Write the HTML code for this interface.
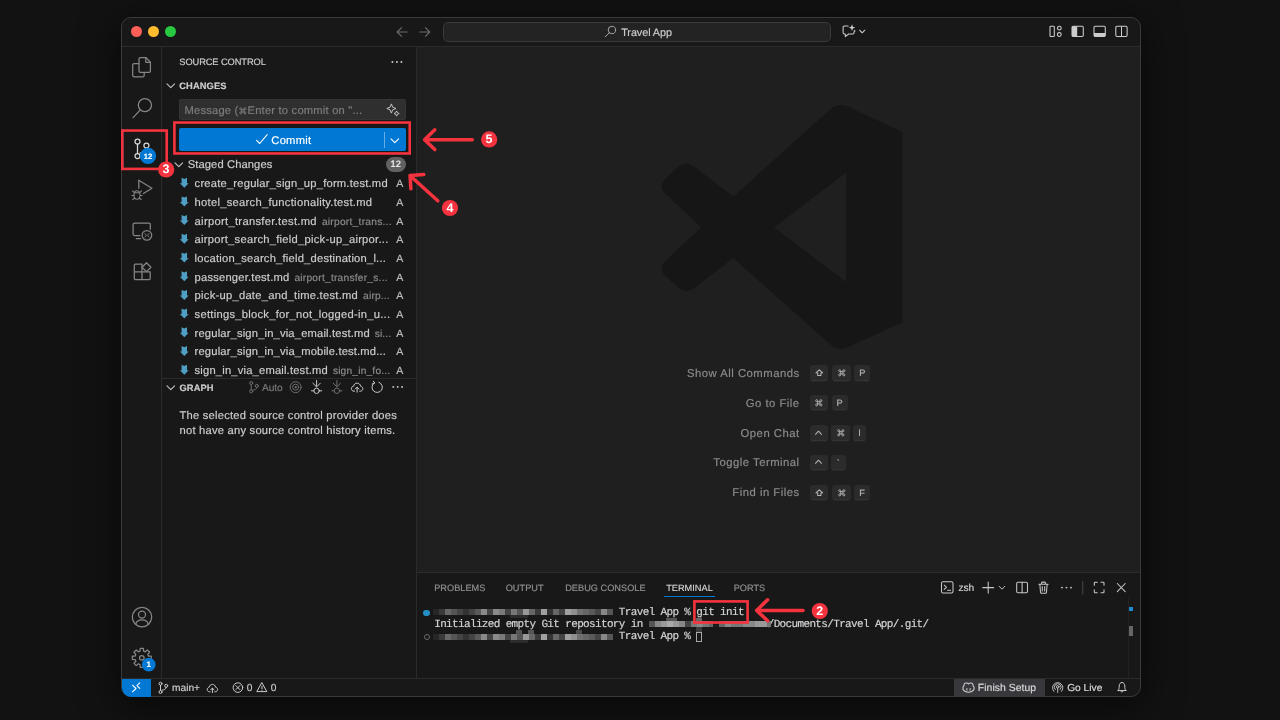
<!DOCTYPE html>
<html>
<head>
<meta charset="utf-8">
<title>Travel App</title>
<style>
*{box-sizing:border-box;margin:0;padding:0}
html,body{width:1280px;height:720px;overflow:hidden;background:#121212}
body{-webkit-text-stroke:.18px;text-rendering:geometricPrecision;font-family:"Liberation Sans",sans-serif;color:#ccc;position:relative;-webkit-font-smoothing:antialiased}
.abs{position:absolute}
#win{position:absolute;left:121px;top:17px;width:1020px;height:680px;border-radius:10px;background:#181818;border:1px solid #3a3a3a;overflow:hidden;box-shadow:0 8px 36px 4px rgba(0,0,0,.5)}
/* everything inside #root is positioned in page coordinates */
#root{position:absolute;left:0;top:0;width:1280px;height:720px;will-change:transform}
.t{position:absolute;white-space:nowrap;line-height:1}
svg{position:absolute;overflow:visible}
.ic{fill:none;stroke:#868686;stroke-width:1.25;stroke-linecap:round;stroke-linejoin:round}
.row{position:absolute;left:162px;width:254px;height:19px}
.fn{position:absolute;left:194.6px;font-size:11.2px;letter-spacing:.22px;color:#ccc;white-space:nowrap;line-height:1}
.fr{position:absolute;left:194.6px;height:18.7px;line-height:18.7px;font-size:11.2px;color:#ccc;white-space:nowrap}.fr span{display:inline-block}.fr .s2{font-size:10.2px;color:#8c8c8c}.fr .sa{font-size:10.6px;color:#bdbdbd}
.st{position:absolute;left:396.4px;font-size:10.2px;color:#bdbdbd;line-height:1}


.key{position:absolute;height:15.5px;border-radius:3px;background:#2b2b2b;box-shadow:0 1px 0 #262626;border-bottom:1px solid #343434}
.lbl{position:absolute;right:480.4px;font-size:11.3px;letter-spacing:.49px;color:#8b8b8b;white-space:nowrap;line-height:1}
.kt{position:absolute;font-size:9.2px;color:#b4b4b4;line-height:1}
.tab{position:absolute;top:584px;font-size:9.2px;color:#8f8f8f;white-space:nowrap;line-height:1;letter-spacing:.02px}
.term{position:absolute;font-family:"Liberation Mono",monospace;font-size:11px;letter-spacing:-.645px;color:#d4d4d4;white-space:pre;line-height:1}
.sb{position:absolute;top:684.1px;font-size:10.2px;color:#ccc;white-space:nowrap;line-height:1}
</style>
</head>
<body>
<div id="win"></div>
<div id="root">

<!-- ===== TITLE BAR ===== -->
<div class="abs" style="left:122px;top:46px;width:1018px;height:1px;background:#2b2b2b"></div>
<div class="abs" style="left:130.5px;top:26.3px;width:11px;height:11px;border-radius:50%;background:#fe5f57"></div>
<div class="abs" style="left:147.5px;top:26.3px;width:11px;height:11px;border-radius:50%;background:#febc2e"></div>
<div class="abs" style="left:164.5px;top:26.3px;width:11px;height:11px;border-radius:50%;background:#28c840"></div>
<!-- nav arrows -->
<svg style="left:396px;top:26px" width="36" height="12" viewBox="0 0 36 12"><g fill="none" stroke="#6a6a6a" stroke-width="1.1" stroke-linecap="round" stroke-linejoin="round"><path d="M11.2 6H1.3M5.6 1.6L1.2 6l4.4 4.4"/><path d="M23.8 6h9.9M29.4 1.6L33.8 6l-4.4 4.4"/></g></svg>
<!-- command center -->
<div class="abs" style="left:442.5px;top:21.5px;width:388.5px;height:20px;border:1px solid #3a3a3a;border-radius:5px;background:#232323"></div>
<svg style="left:604px;top:25px" width="13" height="13" viewBox="0 0 13 13"><g fill="none" stroke="#a8a8a8" stroke-width="1" stroke-linecap="round"><circle cx="7.9" cy="5" r="3.7"/><path d="M5.3 7.7L1.2 11.9"/></g></svg>
<div class="t" style="left:621.2px;top:27.800px;font-size:10.800px;color:#ccc;letter-spacing:-.05px">Travel App</div>
<!-- copilot chat icon -->
<svg style="left:842px;top:24px" width="26" height="14" viewBox="0 0 26 14"><g fill="none" stroke="#ccc" stroke-width="1.05" stroke-linecap="round" stroke-linejoin="round"><path d="M6.2 2H2.3c-.7 0-1.2.5-1.2 1.2v5.6c0 .7.5 1.2 1.2 1.2h1v2.6L6.6 10h4.2c.7 0 1.2-.5 1.2-1.2V8"/><path d="M17.6 6.2l2.6 2.6 2.6-2.6"/></g><path d="M10 0.3l.9 2.4 2.4.9-2.4.9-.9 2.4-.9-2.4-2.4-.9 2.4-.9z" fill="#ccc"/><path d="M12.6 5.6l.4 1 .9.4-.9.4-.4 1-.4-1-.9-.4.9-.4z" fill="#ccc"/></svg>
<!-- layout icons -->
<svg style="left:1049px;top:24.900px" width="80" height="13" viewBox="0 0 80 13"><g fill="none" stroke="#ccc" stroke-width="1.05" stroke-linejoin="round">
<rect x="1" y="1.2" width="4.3" height="10.3" rx=".8"/><circle cx="10.3" cy="3.1" r="1.9"/><circle cx="10.3" cy="9.5" r="1.9"/>
<rect x="23" y="1.2" width="11.3" height="10.3" rx="1.2"/>
<rect x="45" y="1.2" width="11.3" height="10.3" rx="1.2"/>
<rect x="66.8" y="1.2" width="11.3" height="10.3" rx="1.2"/><path d="M72.5 1.2v10.3"/></g>
<path d="M23 2.2c0-.6.4-1 1-1h4.2v10.3H24c-.6 0-1-.4-1-1z" fill="#ccc"/>
<path d="M45 8h11.3v2.500c0 .6-.4 1-1 1H46c-.6 0-1-.4-1-1z" fill="#ccc"/>
</svg>
<!--TITLEBAR-END-->

<!-- ===== ACTIVITY BAR ===== -->
<div class="abs" style="left:161px;top:47px;width:1px;height:632px;background:#2b2b2b"></div>

<!-- files -->
<svg style="left:0;top:0" width="1280" height="720" viewBox="0 0 1280 720"><g class="ic">
<path d="M140.4 57.7h5.6l4.4 4.4v8.9c0 .8-.6 1.4-1.4 1.4h-8.6c-.8 0-1.4-.6-1.4-1.4V59.100c0-.8.600-1.400 1.400-1.400z"/><path d="M145.800 57.800v4.500h4.500"/>
<path d="M138.700 63.600h-4.600c-.8 0-1.400.6-1.400 1.400v10.400c0 .8.600 1.400 1.400 1.400h8.700c.8 0 1.400-.6 1.400-1.400v-2.800"/>
<!-- search -->
<circle cx="144.900" cy="105.100" r="6.600"/><path d="M140.300 109.900l-7.200 7.800"/>
<!-- debug -->
<path d="M138.800 188.300v-8.100l13.100 8.100-8.500 5.200"/>
<path d="M134.100 192.800h5.800M134 195.300c0-3.500 1.200-4.600 3-4.600s3 1.100 3 4.600c0 2.600-1.300 4-3 4s-3-1.400-3-4zM134 195.400h-2.100M140 195.400h2.100M134.300 192.600l-1.800-1.700M139.700 192.600l1.800-1.700M134.600 198l-1.900 1.700M139.400 198l1.900 1.700" stroke-width="1.050"/>
<!-- remote explorer -->
<path d="M139.800 235.500h-5.200c-.8 0-1.500-.7-1.500-1.500v-9.400c0-.8.700-1.500 1.500-1.500h14.200c.8 0 1.500.7 1.500 1.500v4.600M136.300 238.600h4.300"/>
<circle cx="146.900" cy="235.300" r="4.800"/><path d="M144.900 233.600l1.500 1.700-1.500 1.700M149 233.600l-1.500 1.700 1.500 1.700" stroke-width=".9"/>
<!-- extensions -->
<path d="M142 264.200h-6.600c-.6 0-1.100.5-1.100 1.100v13.300c0 .6.500 1.100 1.100 1.100h13.700c.6 0 1.100-.5 1.100-1.100v-6.800h-15.800M142 264.200v15.400"/>
<path d="M146.500 262.700l4.400 4.500-4.400 4.400-4.400-4.400z"/>
<!-- account -->
<circle cx="142" cy="617.100" r="9.700"/><circle cx="142" cy="614.600" r="3.500"/><path d="M135.700 624.300c.6-2.900 3.200-4.400 6.300-4.400s5.700 1.500 6.300 4.400"/>
<!-- gear -->
<path d="M148.47 656.03 L151.26 656.18 L151.26 659.42 L148.47 659.57 L147.77 661.26 L149.64 663.34 L147.34 665.64 L145.26 663.77 L143.57 664.47 L143.42 667.26 L140.18 667.26 L140.03 664.47 L138.34 663.77 L136.26 665.64 L133.96 663.34 L135.83 661.26 L135.13 659.57 L132.34 659.42 L132.34 656.18 L135.13 656.03 L135.83 654.34 L133.96 652.26 L136.26 649.96 L138.34 651.83 L140.03 651.13 L140.18 648.34 L143.42 648.34 L143.57 651.13 L145.26 651.83 L147.34 649.96 L149.64 652.26 L147.77 654.34Z"/><circle cx="141.800" cy="657.800" r="2.300"/>
</g>
<!-- source control (active) -->
<g fill="none" stroke="#d7d7d7" stroke-width="1.250" stroke-linecap="round"><circle cx="137.500" cy="141.500" r="2.500"/><circle cx="146.400" cy="145.600" r="2.500"/><circle cx="137.500" cy="156" r="2.500"/><path d="M137.500 144.100v9.300M146.400 148.200c0 3.200-3 4.300-6.300 4.800"/></g>
<rect x="122" y="129" width="1.300" height="41" fill="#0078d4"/>
<circle cx="148" cy="155.900" r="8.100" fill="#0078d4"/>
<circle cx="148.700" cy="664.700" r="6.900" fill="#0078d4"/>
</svg>
<div class="t" style="left:140px;top:152.900px;width:16px;text-align:center;font-size:7.600px;font-weight:bold;color:#fff">12</div>
<div class="t" style="left:140.700px;top:661.300px;width:16px;text-align:center;font-size:8px;font-weight:bold;color:#fff">1</div>
<!--ACTIVITY-END-->

<!-- ===== SIDEBAR ===== -->
<div class="abs" style="left:416px;top:47px;width:1px;height:632px;background:#2b2b2b"></div>

<div class="t" style="left:179.300px;top:58.200px;font-size:9.300px;color:#ccc;letter-spacing:-.1px">SOURCE CONTROL</div>
<svg style="left:391px;top:60px" width="13" height="4" viewBox="0 0 13 4"><g fill="#ccc"><circle cx="1.400" cy="2" r=".95"/><circle cx="5.900" cy="2" r=".95"/><circle cx="10.400" cy="2" r=".95"/></g></svg>
<!-- CHANGES header -->
<svg style="left:166px;top:82px" width="10" height="8" viewBox="0 0 10 8"><path d="M1 1.800l3.800 3.900 3.800-3.900" fill="none" stroke="#c5c5c5" stroke-width="1.050" stroke-linecap="round" stroke-linejoin="round"/></svg>
<div class="t" style="left:179.300px;top:82.200px;font-size:9.300px;font-weight:bold;color:#ccc;letter-spacing:.1px">CHANGES</div>
<!-- input -->
<div class="abs" style="left:178.500px;top:99px;width:227.500px;height:21.400px;background:#2f2f2f;border:1px solid #353535;border-radius:2px"></div>
<div class="t" style="left:184.500px;top:105.800px;font-size:11.200px;color:#7d7d7d;letter-spacing:.2px">Message (<svg style="position:relative;display:inline-block;vertical-align:-.6px;margin:0 .6px 0 .7px" width="7.700" height="7.700" viewBox="0 0 9 9"><path d="M3.200 3.200V2a1.200 1.200 0 1 0-1.200 1.200H7A1.200 1.200 0 1 0 5.800 2V7A1.200 1.200 0 1 0 7 5.800H2A1.200 1.200 0 1 0 3.200 7z" fill="none" stroke="#7d7d7d" stroke-width="1.050"/></svg>Enter to commit on "...</div>
<svg style="left:386px;top:103px" width="14" height="14" viewBox="0 0 14 14"><g fill="none" stroke="#c8c8c8" stroke-width=".95" stroke-linejoin="round"><path d="M5.400 .9l1.300 3.300 3.300 1.300-3.300 1.300-1.300 3.300-1.300-3.300L.8 5.500l3.300-1.300z"/><path d="M10.600 7.900l.8 1.800 1.800.8-1.800.8-.8 1.800-.8-1.800-1.800-.8 1.800-.8z"/></g></svg>
<!-- commit button -->
<div class="abs" style="left:178.500px;top:128px;width:227.500px;height:23.300px;background:#0078d4;border-radius:2px"></div>
<div class="abs" style="left:384.300px;top:131.500px;width:1px;height:16.500px;background:rgba(255,255,255,.4)"></div>
<svg style="left:255px;top:133px" width="14" height="12" viewBox="0 0 14 12"><path d="M1.600 7.300l3.100 3.200L12.200 1.600" fill="none" stroke="#fff" stroke-width="1.100" stroke-linecap="round" stroke-linejoin="round"/></svg>
<div class="t" style="left:271.300px;top:135.700px;font-size:11.200px;color:#fff;letter-spacing:.25px">Commit</div>
<svg style="left:390px;top:136.500px" width="10" height="8" viewBox="0 0 10 8"><path d="M1 1.800l3.800 3.900 3.800-3.900" fill="none" stroke="#fff" stroke-width="1.050" stroke-linecap="round" stroke-linejoin="round"/></svg>
<!-- staged changes -->
<svg style="left:174px;top:160.500px" width="10" height="8" viewBox="0 0 10 8"><path d="M1 1.800l3.800 3.900 3.800-3.900" fill="none" stroke="#c5c5c5" stroke-width="1.050" stroke-linecap="round" stroke-linejoin="round"/></svg>
<div class="t" style="left:187.700px;top:159.600px;font-size:11.200px;color:#ccc;letter-spacing:.1px">Staged Changes</div>
<div class="abs" style="left:385.600px;top:156.500px;width:20.400px;height:15.400px;border-radius:8px;background:#616161"></div>
<div class="t" style="left:385.600px;top:159.800px;width:20.400px;text-align:center;font-size:9.300px;color:#f8f8f8">12</div>
<svg style="left:0;top:0" width="1280" height="720" viewBox="0 0 1280 720"><g transform="translate(184.300 183.0)"><path d="M-2.700 -5.300l2.700 1.200 2.700-1.200v5.500h1.700l-4.400 4.500-4.400-4.500h1.700z" fill="#4f9fc4"/></g><g transform="translate(184.300 201.7)"><path d="M-2.700 -5.300l2.700 1.200 2.700-1.200v5.500h1.700l-4.400 4.500-4.400-4.500h1.700z" fill="#4f9fc4"/></g><g transform="translate(184.300 220.4)"><path d="M-2.700 -5.300l2.700 1.200 2.700-1.200v5.500h1.700l-4.400 4.500-4.400-4.500h1.700z" fill="#4f9fc4"/></g><g transform="translate(184.300 239.1)"><path d="M-2.700 -5.300l2.700 1.200 2.700-1.200v5.500h1.700l-4.400 4.500-4.400-4.500h1.700z" fill="#4f9fc4"/></g><g transform="translate(184.300 257.8)"><path d="M-2.700 -5.300l2.700 1.200 2.700-1.200v5.500h1.700l-4.400 4.500-4.400-4.500h1.700z" fill="#4f9fc4"/></g><g transform="translate(184.300 276.5)"><path d="M-2.700 -5.300l2.700 1.200 2.700-1.200v5.500h1.700l-4.400 4.500-4.400-4.500h1.700z" fill="#4f9fc4"/></g><g transform="translate(184.300 295.2)"><path d="M-2.700 -5.300l2.700 1.200 2.700-1.200v5.500h1.700l-4.400 4.500-4.400-4.500h1.700z" fill="#4f9fc4"/></g><g transform="translate(184.300 313.9)"><path d="M-2.700 -5.300l2.700 1.200 2.700-1.200v5.500h1.700l-4.400 4.500-4.400-4.500h1.700z" fill="#4f9fc4"/></g><g transform="translate(184.300 332.6)"><path d="M-2.700 -5.300l2.700 1.200 2.700-1.200v5.500h1.700l-4.400 4.500-4.400-4.500h1.700z" fill="#4f9fc4"/></g><g transform="translate(184.300 351.3)"><path d="M-2.700 -5.300l2.700 1.200 2.700-1.200v5.500h1.700l-4.400 4.500-4.400-4.500h1.700z" fill="#4f9fc4"/></g><g transform="translate(184.300 370.0)"><path d="M-2.700 -5.300l2.700 1.200 2.700-1.200v5.500h1.700l-4.400 4.500-4.400-4.500h1.700z" fill="#4f9fc4"/></g></svg>
<div class="fr" style="top:175.1px"><span style="letter-spacing:0.208px">create_regular_sign_up_form.test.md</span><span class="sa" style="margin-left:8.40px">A</span></div>
<div class="fr" style="top:193.8px"><span style="letter-spacing:0.277px">hotel_search_functionality.test.md</span><span class="sa" style="margin-left:23.90px">A</span></div>
<div class="fr" style="top:212.5px"><span style="letter-spacing:0.302px">airport_transfer.test.md</span><span class="s2" style="margin-left:5.00px;letter-spacing:0.265px">airport_trans...</span><span class="sa" style="margin-left:4.40px">A</span></div>
<div class="fr" style="top:231.2px"><span style="letter-spacing:0.260px">airport_search_field_pick-up_airpor...</span><span class="sa" style="margin-left:7.65px">A</span></div>
<div class="fr" style="top:249.9px"><span style="letter-spacing:0.210px">location_search_field_destination_l...</span><span class="sa" style="margin-left:10.15px">A</span></div>
<div class="fr" style="top:268.6px"><span style="letter-spacing:0.199px">passenger.test.md</span><span class="s2" style="margin-left:5.00px;letter-spacing:0.241px">airport_transfer_s...</span><span class="sa" style="margin-left:8.40px">A</span></div>
<div class="fr" style="top:287.3px"><span style="letter-spacing:0.255px">pick-up_date_and_time.test.md</span><span class="s2" style="margin-left:5.00px;letter-spacing:0.177px">airp...</span><span class="sa" style="margin-left:6.40px">A</span></div>
<div class="fr" style="top:306.0px"><span style="letter-spacing:0.263px">settings_block_for_not_logged-in_u...</span><span class="sa" style="margin-left:5.90px">A</span></div>
<div class="fr" style="top:324.7px"><span style="letter-spacing:0.165px">regular_sign_in_via_email.test.md</span><span class="s2" style="margin-left:5.00px;letter-spacing:0.077px">si...</span><span class="sa" style="margin-left:5.15px">A</span></div>
<div class="fr" style="top:343.4px"><span style="letter-spacing:0.166px">regular_sign_in_via_mobile.test.md...</span><span class="sa" style="margin-left:10.15px">A</span></div>
<div class="fr" style="top:362.1px"><span style="letter-spacing:0.182px">sign_in_via_email.test.md</span><span class="s2" style="margin-left:5.00px;letter-spacing:0.192px">sign_in_fo...</span><span class="sa" style="margin-left:5.90px">A</span></div>


<!-- GRAPH -->
<div class="abs" style="left:162px;top:377.500px;width:254px;height:1px;background:#2b2b2b"></div>
<svg style="left:166px;top:383.500px" width="10" height="8" viewBox="0 0 10 8"><path d="M1 1.800l3.800 3.900 3.800-3.900" fill="none" stroke="#c5c5c5" stroke-width="1.050" stroke-linecap="round" stroke-linejoin="round"/></svg>
<div class="t" style="left:179.500px;top:383.800px;font-size:9.300px;font-weight:bold;color:#ccc;letter-spacing:.1px">GRAPH</div>
<svg style="left:0;top:0" width="1280" height="720" viewBox="0 0 1280 720"><g fill="none" stroke-width="1" stroke-linecap="round" stroke-linejoin="round">
<g stroke="#6e6e6e"><circle cx="251.200" cy="383" r="1.500"/><circle cx="251.200" cy="391.300" r="1.500"/><circle cx="256.800" cy="385.900" r="1.500"/><path d="M251.200 384.600v5.100M256.800 387.500c0 1.800-2.200 2.500-4 2.700"/>
<circle cx="295.600" cy="387.200" r="5.500"/><circle cx="295.600" cy="387.200" r="3"/><circle cx="295.600" cy="387.200" r=".7" fill="#6e6e6e"/>
<path d="M336.900 380.500v6M333.200 383.200l3.700 3.700 3.700-3.700M331.800 390.800h2.300M339.700 390.800h2.300"/><circle cx="336.900" cy="390.800" r="2.700"/></g>
<g stroke="#ccc"><path d="M316.600 380.500v6M312.900 383.200l3.700 3.700 3.700-3.700M311.500 390.800h2.300M319.400 390.800h2.300"/><circle cx="316.600" cy="390.800" r="2.700"/>
<path d="M354.500 391.200h-.5c-1.500 0-2.600-1.100-2.600-2.500 0-1.300.9-2.300 2.200-2.500.3-1.900 1.700-3.100 3.500-3.100s3.200 1.200 3.500 3.100c1.300.2 2.200 1.200 2.200 2.500 0 1.400-1.100 2.500-2.600 2.500h-.5M357.100 392.200v-4.800M355.200 389l1.900-1.900 1.900 1.900"/>
<path d="M374.400 382.800a5.200 5.200 0 1 0 4.500-.5M373.500 381.200l1 2.100-2.300.7" />
</g></g>
<g fill="#ccc"><circle cx="393.300" cy="386.900" r=".95"/><circle cx="397.700" cy="386.900" r=".95"/><circle cx="402.100" cy="386.900" r=".95"/></g></svg>
<div class="t" style="left:262px;top:383.500px;font-size:10.200px;color:#787878;letter-spacing:-.1px">Auto</div>

<div class="t" style="left:179.500px;top:410.600px;font-size:11.200px;color:#ccc;letter-spacing:.225px">The selected source control provider does</div>
<div class="t" style="left:179.500px;top:426.100px;font-size:11.200px;color:#ccc;letter-spacing:.225px">not have any source control history items.</div>
<!--SIDEBAR-END-->

<!-- ===== EDITOR ===== -->
<div class="abs" style="left:417px;top:47px;width:723px;height:526px;background:#1f1f1f"></div>
<svg style="left:0;top:0" width="1280" height="720" viewBox="0 0 1280 720"><path d="M830.4 109.2 Q840.0 100.8 853.3 109.2 L902.5 131.7 L902.5 322.5 L853.3 344.6 Q840.0 352.9 830.4 344.6 L733.3 257.9 L694.2 288.3 Q685.8 294.2 677.5 287.1 L664.2 274.6 Q658.3 268.3 665.0 261.2 L701.2 227.5 L665.0 193.3 Q658.3 186.7 664.2 180.0 L677.5 167.5 Q685.8 160.4 694.2 166.7 L733.3 196.7 Z M846.2 172.5 L846.2 282.1 L774.2 227.5 Z" fill="#161616" fill-rule="evenodd"/></svg>
<div class="lbl" style="top:368.5px">Show All Commands</div><div class="key" style="left:809.6px;top:365.1px;width:18.6px"></div><svg style="left:814.6px;top:368.8px" width="8.6" height="7.6" viewBox="0 0 9 9" preserveAspectRatio="none"><path d="M4.500 1L8 4.600H6.200V7.800H2.800V4.600H1z" fill="none" stroke="#b4b4b4" stroke-width="1.150" stroke-linejoin="round"/></svg><div class="key" style="left:832.2px;top:365.1px;width:18.5px"></div><svg style="left:837.7px;top:369.1px" width="7.6" height="7.6" viewBox="0 0 9 9" preserveAspectRatio="none"><path d="M3.200 3.200V2a1.200 1.200 0 1 0-1.200 1.200H7A1.200 1.200 0 1 0 5.800 2V7A1.200 1.200 0 1 0 7 5.800H2A1.200 1.200 0 1 0 3.200 7z" fill="none" stroke="#b4b4b4" stroke-width="1.050"/></svg><div class="key" style="left:854.4px;top:365.1px;width:16px"></div><div class="kt" style="left:854.4px;width:16px;text-align:center;top:369.1px">P</div>
<div class="lbl" style="top:398.800px">Go to File</div><div class="key" style="left:809.6px;top:394.9px;width:18.6px"></div><svg style="left:815.1px;top:398.9px" width="7.6" height="7.6" viewBox="0 0 9 9" preserveAspectRatio="none"><path d="M3.200 3.200V2a1.200 1.200 0 1 0-1.200 1.200H7A1.200 1.200 0 1 0 5.800 2V7A1.200 1.200 0 1 0 7 5.800H2A1.200 1.200 0 1 0 3.200 7z" fill="none" stroke="#b4b4b4" stroke-width="1.050"/></svg><div class="key" style="left:831.6px;top:394.9px;width:16.2px"></div><div class="kt" style="left:831.6px;width:16.2px;text-align:center;top:398.9px">P</div>
<div class="lbl" style="top:428.5px">Open Chat</div><div class="key" style="left:809.6px;top:425.1px;width:18.2px"></div><svg style="left:814.2px;top:428.7px" width="9" height="9" viewBox="0 0 9 9" preserveAspectRatio="none"><path d="M1.500 5.300L4.500 2.200l3 3.100" fill="none" stroke="#b4b4b4" stroke-width="1.050" stroke-linecap="round" stroke-linejoin="round"/></svg><div class="key" style="left:831.1px;top:425.1px;width:18.5px"></div><svg style="left:836.6px;top:429.1px" width="7.6" height="7.6" viewBox="0 0 9 9" preserveAspectRatio="none"><path d="M3.200 3.200V2a1.200 1.200 0 1 0-1.200 1.200H7A1.200 1.200 0 1 0 5.800 2V7A1.200 1.200 0 1 0 7 5.800H2A1.200 1.200 0 1 0 3.200 7z" fill="none" stroke="#b4b4b4" stroke-width="1.050"/></svg><div class="key" style="left:853.3px;top:425.1px;width:12.7px"></div><div class="kt" style="left:853.3px;width:12.7px;text-align:center;top:429.1px">I</div>
<div class="lbl" style="top:458.0px">Toggle Terminal</div><div class="key" style="left:809.6px;top:454.6px;width:18.2px"></div><svg style="left:814.2px;top:458.2px" width="9" height="9" viewBox="0 0 9 9" preserveAspectRatio="none"><path d="M1.500 5.300L4.500 2.200l3 3.100" fill="none" stroke="#b4b4b4" stroke-width="1.050" stroke-linecap="round" stroke-linejoin="round"/></svg><div class="key" style="left:831.1px;top:454.6px;width:14.5px"></div><div class="kt" style="left:831.1px;width:14.5px;text-align:center;top:458.6px">`</div>
<div class="lbl" style="top:488.3px">Find in Files</div><div class="key" style="left:809.6px;top:484.9px;width:18.6px"></div><svg style="left:814.6px;top:488.6px" width="8.6" height="7.6" viewBox="0 0 9 9" preserveAspectRatio="none"><path d="M4.500 1L8 4.600H6.200V7.800H2.800V4.600H1z" fill="none" stroke="#b4b4b4" stroke-width="1.150" stroke-linejoin="round"/></svg><div class="key" style="left:832.2px;top:484.9px;width:18.5px"></div><svg style="left:837.7px;top:488.9px" width="7.6" height="7.6" viewBox="0 0 9 9" preserveAspectRatio="none"><path d="M3.200 3.200V2a1.200 1.200 0 1 0-1.200 1.200H7A1.200 1.200 0 1 0 5.800 2V7A1.200 1.200 0 1 0 7 5.800H2A1.200 1.200 0 1 0 3.200 7z" fill="none" stroke="#b4b4b4" stroke-width="1.050"/></svg><div class="key" style="left:854.4px;top:484.9px;width:15.2px"></div><div class="kt" style="left:854.4px;width:15.2px;text-align:center;top:488.9px">F</div>
<!--EDITOR-END-->

<!-- ===== PANEL ===== -->
<div class="abs" style="left:417px;top:572px;width:723px;height:1px;background:#2b2b2b"></div>
<div class="tab" style="left:434.2px;color:#8f8f8f">PROBLEMS</div><div class="tab" style="left:505.7px;color:#8f8f8f">OUTPUT</div><div class="tab" style="left:565.2px;color:#8f8f8f">DEBUG CONSOLE</div><div class="tab" style="left:666.2px;color:#e0e0e0;-webkit-text-stroke:.05px">TERMINAL</div><div class="tab" style="left:733.7px;color:#8f8f8f">PORTS</div><div class="abs" style="left:664px;top:596px;width:50.700px;height:1px;background:#0078d4"></div>
<div class="term" style="left:612.9px;top:608.400px"> Travel App % git init</div>
<div class="term" style="left:434.2px;top:620.400px">Initialized empty Git repository in </div>
<div class="term" style="left:767.7px;top:620.400px">/Documents/Travel App/.git/</div>
<div class="term" style="left:612.9px;top:632.400px"> Travel App % </div>
<svg style="left:0;top:0" width="1280" height="720" viewBox="0 0 1280 720" shape-rendering="crispEdges"><rect x="432.5" y="609" width="6.05" height="6.2" fill="#262626"/><rect x="438.5" y="609" width="6.05" height="6.2" fill="#3a3a3a"/><rect x="444.5" y="609" width="6.05" height="6.2" fill="#686868"/><rect x="450.5" y="609" width="6.05" height="6.2" fill="#555"/><rect x="456.5" y="609" width="6.05" height="6.2" fill="#444"/><rect x="462.5" y="609" width="6.05" height="6.2" fill="#333"/><rect x="468.5" y="609" width="6.05" height="6.2" fill="#444"/><rect x="474.5" y="609" width="6.05" height="6.2" fill="#5a5a5a"/><rect x="480.5" y="609" width="6.05" height="6.2" fill="#8a8a8a"/><rect x="486.5" y="609" width="6.05" height="6.2" fill="#444"/><rect x="492.5" y="609" width="6.05" height="6.2" fill="#8a8a8a"/><rect x="498.5" y="609" width="6.05" height="6.2" fill="#7a7a7a"/><rect x="504.5" y="609" width="6.05" height="6.2" fill="#444"/><rect x="510.5" y="609" width="6.05" height="6.2" fill="#777"/><rect x="516.5" y="609" width="6.05" height="6.2" fill="#555"/><rect x="522.5" y="609" width="6.05" height="6.2" fill="#999"/><rect x="528.5" y="609" width="6.05" height="6.2" fill="#666"/><rect x="534.5" y="609" width="6.05" height="6.2" fill="#3a3a3a"/><rect x="540.5" y="609" width="6.05" height="6.2" fill="#a0a0a0"/><rect x="546.5" y="609" width="6.05" height="6.2" fill="#333"/><rect x="552.5" y="609" width="6.05" height="6.2" fill="#666"/><rect x="558.5" y="609" width="6.05" height="6.2" fill="#444"/><rect x="564.5" y="609" width="6.05" height="6.2" fill="#a0a0a0"/><rect x="570.5" y="609" width="6.05" height="6.2" fill="#909090"/><rect x="576.5" y="609" width="6.05" height="6.2" fill="#707070"/><rect x="582.5" y="609" width="6.05" height="6.2" fill="#666"/><rect x="588.5" y="609" width="6.05" height="6.2" fill="#5a5a5a"/><rect x="594.5" y="609" width="6.05" height="6.2" fill="#444"/><rect x="600.5" y="609" width="6.05" height="6.2" fill="#888"/><rect x="606.5" y="609" width="6.05" height="6.2" fill="#555"/><rect x="432.5" y="633.6" width="6.05" height="6.2" fill="#262626"/><rect x="438.5" y="633.6" width="6.05" height="6.2" fill="#3a3a3a"/><rect x="444.5" y="633.6" width="6.05" height="6.2" fill="#686868"/><rect x="450.5" y="633.6" width="6.05" height="6.2" fill="#555"/><rect x="456.5" y="633.6" width="6.05" height="6.2" fill="#444"/><rect x="462.5" y="633.6" width="6.05" height="6.2" fill="#333"/><rect x="468.5" y="633.6" width="6.05" height="6.2" fill="#444"/><rect x="474.5" y="633.6" width="6.05" height="6.2" fill="#5a5a5a"/><rect x="480.5" y="633.6" width="6.05" height="6.2" fill="#8a8a8a"/><rect x="486.5" y="633.6" width="6.05" height="6.2" fill="#444"/><rect x="492.5" y="633.6" width="6.05" height="6.2" fill="#8a8a8a"/><rect x="498.5" y="633.6" width="6.05" height="6.2" fill="#7a7a7a"/><rect x="504.5" y="633.6" width="6.05" height="6.2" fill="#444"/><rect x="510.5" y="633.6" width="6.05" height="6.2" fill="#777"/><rect x="516.5" y="633.6" width="6.05" height="6.2" fill="#555"/><rect x="522.5" y="633.6" width="6.05" height="6.2" fill="#999"/><rect x="528.5" y="633.6" width="6.05" height="6.2" fill="#666"/><rect x="534.5" y="633.6" width="6.05" height="6.2" fill="#3a3a3a"/><rect x="540.5" y="633.6" width="6.05" height="6.2" fill="#a0a0a0"/><rect x="546.5" y="633.6" width="6.05" height="6.2" fill="#333"/><rect x="552.5" y="633.6" width="6.05" height="6.2" fill="#666"/><rect x="558.5" y="633.6" width="6.05" height="6.2" fill="#444"/><rect x="564.5" y="633.6" width="6.05" height="6.2" fill="#a0a0a0"/><rect x="570.5" y="633.6" width="6.05" height="6.2" fill="#909090"/><rect x="576.5" y="633.6" width="6.05" height="6.2" fill="#707070"/><rect x="582.5" y="633.6" width="6.05" height="6.2" fill="#666"/><rect x="588.5" y="633.6" width="6.05" height="6.2" fill="#5a5a5a"/><rect x="594.5" y="633.6" width="6.05" height="6.2" fill="#444"/><rect x="600.5" y="633.6" width="6.05" height="6.2" fill="#888"/><rect x="606.5" y="633.6" width="6.05" height="6.2" fill="#555"/><rect x="510" y="615.2" width="18" height="3.2" fill="#2c2c2c"/><rect x="510" y="639.800" width="18" height="3.2" fill="#2c2c2c"/><rect x="516" y="630.400" width="6" height="3.2" fill="#555"/><rect x="528" y="630.400" width="6" height="3.2" fill="#555"/><rect x="576" y="630.400" width="6" height="3.2" fill="#4a4a4a"/><rect x="648.7" y="621.2" width="6.05" height="5.8" fill="#555"/><rect x="654.7" y="621.2" width="6.05" height="5.8" fill="#888"/><rect x="660.7" y="621.2" width="6.05" height="5.8" fill="#999"/><rect x="666.7" y="621.2" width="6.05" height="5.8" fill="#aaa"/><rect x="672.7" y="621.2" width="6.05" height="5.8" fill="#999"/><rect x="678.7" y="621.2" width="6.05" height="5.8" fill="#888"/><rect x="684.7" y="621.2" width="6.05" height="5.8" fill="#444"/><rect x="690.7" y="621.2" width="6.05" height="5.8" fill="#777"/><rect x="696.7" y="621.2" width="6.05" height="5.8" fill="#888"/><rect x="702.7" y="621.2" width="6.05" height="5.8" fill="#777"/><rect x="708.7" y="621.2" width="4.45" height="5.8" fill="#666"/><rect x="713.1" y="621.2" width="5.95" height="5.8" fill="#1c1c1c"/><rect x="719.0" y="621.2" width="6.05" height="5.8" fill="#666"/><rect x="725.0" y="621.2" width="6.05" height="5.8" fill="#888"/><rect x="731.0" y="621.2" width="6.05" height="5.8" fill="#777"/><rect x="737.0" y="621.2" width="6.05" height="5.8" fill="#777"/><rect x="743.0" y="621.2" width="6.05" height="5.8" fill="#888"/><rect x="749.0" y="621.2" width="6.05" height="5.8" fill="#888"/><rect x="755.0" y="621.2" width="6.05" height="5.8" fill="#999"/><rect x="761.0" y="621.2" width="6.05" height="5.8" fill="#999"/><rect x="767.0" y="621.2" width="3.65" height="5.8" fill="#777"/><rect x="665.600" y="618" width="11.500" height="3.2" fill="#555"/><rect x="695.600" y="618" width="6" height="3.2" fill="#666"/><rect x="695.600" y="627" width="6" height="5" fill="#3c3c3c"/></svg>
<div class="abs" style="left:695.600px;top:632px;width:6.300px;height:10px;border:1px solid #a8a8a8"></div>
<div class="abs" style="left:423.200px;top:609.500px;width:6.600px;height:6.600px;border-radius:50%;background:#2290c4"></div>
<div class="abs" style="left:423.500px;top:633.600px;width:6.200px;height:6.200px;border-radius:50%;border:1px solid #6b6b6b"></div>
<div class="abs" style="left:1128px;top:598px;width:1px;height:80px;background:#222"></div><div class="abs" style="left:1129px;top:606.500px;width:4px;height:4.500px;background:#1f8ad2"></div><div class="abs" style="left:1129px;top:625.500px;width:4px;height:10px;background:#666"></div>
<svg style="left:0;top:0" width="1280" height="720" viewBox="0 0 1280 720"><g fill="none" stroke="#c8c8c8" stroke-width="1.050" stroke-linecap="round" stroke-linejoin="round">
<rect x="941.500" y="581.800" width="11.500" height="11.200" rx="1.500"/><path d="M944.200 585.200l2.300 2.100-2.300 2.100M947.600 590.300h3"/>
<path d="M988.200 582.100v11M982.700 587.600h11"/><path d="M999.200 586.300l2.800 2.900 2.800-2.900" stroke-width=".95"/>
<rect x="1016.700" y="582.300" width="10.800" height="10.500" rx="1.300"/><path d="M1022.100 582.300v10.500"/>
<path d="M1038.800 584.300h9.400M1041.600 584.300v-1.300c0-.5.400-.9.900-.9h2c.5 0 .9.400.9.900v1.300M1039.900 584.500l.6 7.800c0 .6.500 1 1.100 1h3.800c.6 0 1.100-.4 1.100-1l.6-7.800M1042.300 586.600v4.400M1044.700 586.600v4.400"/>
<path d="M1094.300 585.300v-2.300c0-.4.300-.7.700-.7h2.300M1101 582.300h2.300c.4 0 .7.300.7.700v2.300M1104 589.800v2.300c0 .4-.3.700-.7.700h-2.300M1097.300 592.800h-2.300c-.4 0-.7-.3-.7-.7v-2.300"/>
<path d="M1117.300 583.500l7.900 8.100M1125.200 583.500l-7.900 8.100"/>
</g><g fill="#c8c8c8"><circle cx="1062" cy="587.600" r=".95"/><circle cx="1066.500" cy="587.600" r=".95"/><circle cx="1071" cy="587.600" r=".95"/></g>
<rect x="1082.300" y="581" width="1" height="13.500" fill="#4a4a4a"/></svg>
<div class="t" style="left:958.400px;top:583.500px;font-size:10.200px;color:#ccc">zsh</div>
<!--PANEL-END-->

<!-- ===== STATUS BAR ===== -->
<div class="abs" style="left:122px;top:678px;width:1018px;height:1px;background:#2b2b2b"></div>
<div class="abs" style="left:122px;top:679px;width:28.500px;height:18px;background:#0078d4;border-bottom-left-radius:9px"></div>
<div class="abs" style="left:954px;top:679px;width:91px;height:17.500px;background:#37373c"></div>
<svg style="left:0;top:0" width="1280" height="720" viewBox="0 0 1280 720"><g fill="none" stroke="#ccc" stroke-width="1" stroke-linecap="round" stroke-linejoin="round">
<path d="M132.500 685.200l3.500 3.300-3.500 3.300M139.800 682.800l-2.900 2.800 2.900 2.800" stroke="#fff" stroke-width="1.050"/>
<circle cx="160.500" cy="683.700" r="1.500"/><circle cx="160.500" cy="692" r="1.500"/><circle cx="166.200" cy="685.800" r="1.500"/><path d="M160.500 685.300v5.100M166.200 687.400c0 1.900-2.300 2.500-4.200 2.800"/>
<path d="M210 691.800h-.4c-1.400 0-2.400-1-2.400-2.300 0-1.200.8-2.100 2-2.300.3-1.700 1.500-2.800 3.200-2.800s2.900 1.100 3.200 2.800c1.200.2 2 1.100 2 2.300 0 1.300-1 2.300-2.400 2.300h-.4M212.400 692.600v-4.300M210.700 689.800l1.700-1.700 1.700 1.700"/>
<circle cx="237.900" cy="687.600" r="4.800"/><path d="M235.900 685.600l4 4M239.900 685.600l-4 4"/>
<path d="M262 682.900l4.800 8.700h-9.600zM262 686.200v2.700M262 690.200v.1"/>
<!-- copilot -->
<path d="M963 689.500v-2c0-.8.400-1.300 1-1.700-.2-1.700.5-2.800 2.200-2.800 1.200 0 2 .4 2.300 1.100.3-.7 1.100-1.100 2.300-1.100 1.700 0 2.400 1.100 2.200 2.800.6.400 1 .9 1 1.700v2c-1.200 1.800-3.200 2.700-5.500 2.700s-4.300-.9-5.500-2.700z" stroke-width="1.100"/><path d="M966.900 688.500v1.400M970.100 688.500v1.400" stroke-width="1.100"/>
<!-- broadcast -->
<circle cx="1057.700" cy="686.800" r="1.300"/><path d="M1057.700 688.200v4.300M1055.300 689.600a3.400 3.400 0 1 1 4.800 0M1053.900 691.400a5.200 5.200 0 1 1 7.600 0" stroke-width=".9"/>
<!-- bell -->
<path d="M1118 690.300c.9-.8 1.200-1.600 1.200-3v-1.300c0-2 1.200-3.500 2.800-3.500s2.800 1.500 2.800 3.500v1.300c0 1.400.3 2.200 1.200 3zM1120.800 690.800c.2.800.6 1.200 1.200 1.200s1-.4 1.200-1.200"/>
</g></svg>
<div class="sb" style="left:172px">main+</div>
<div class="sb" style="left:246.800px">0</div>
<div class="sb" style="left:270.800px">0</div>
<div class="sb" style="left:977.800px;font-size:10.400px;letter-spacing:.05px;color:#d8d8d8">Finish Setup</div>
<div class="sb" style="left:1067.200px;color:#d8d8d8">Go Live</div>
<!--STATUS-END-->

<!-- ===== ANNOTATIONS ===== -->
<svg style="left:0;top:0" width="1280" height="720" viewBox="0 0 1280 720"><g fill="none" stroke="#f5333f" stroke-width="2.600" stroke-linejoin="miter">
<rect x="122.300" y="130.550" width="44.400" height="38.350"/>
<rect x="174.400" y="122.550" width="235.300" height="30.900"/>
<rect x="694.400" y="601.400" width="53.200" height="21.150"/>
</g>
<g fill="none" stroke="#f5333f" stroke-width="3.500" stroke-linecap="round" stroke-linejoin="round">
<path d="M472.300 139.700H425M434.800 129.800L424.600 139.700l10.200 9.900"/>
<path d="M437.800 200.800L410.700 176.200M423.800 174.500l-13.800 .9 .9 13.400"/>
<path d="M803 610.400H757M767.600 599.800L756.600 610.400l11 10.400"/>
</g>
<g fill="#f5333f"><circle cx="166.200" cy="169.500" r="8.100"/><circle cx="450" cy="208" r="8.100"/><circle cx="489.200" cy="139.400" r="8.100"/><circle cx="819.800" cy="611" r="8.100"/></g>
</svg>
<div class="t" style="left:158.0px;top:163.200px;width:16px;text-align:center;font-size:12.500px;font-weight:bold;color:#fff;-webkit-text-stroke:0">3</div>
<div class="t" style="left:441.9px;top:201.800px;width:16px;text-align:center;font-size:12.500px;font-weight:bold;color:#fff;-webkit-text-stroke:0">4</div>
<div class="t" style="left:481.1px;top:133.300px;width:16px;text-align:center;font-size:12.500px;font-weight:bold;color:#fff;-webkit-text-stroke:0">5</div>
<div class="t" style="left:811.7px;top:604.800px;width:16px;text-align:center;font-size:12.500px;font-weight:bold;color:#fff;-webkit-text-stroke:0">2</div>
<!--ANNOT-END-->

</div>
</body>
</html>
